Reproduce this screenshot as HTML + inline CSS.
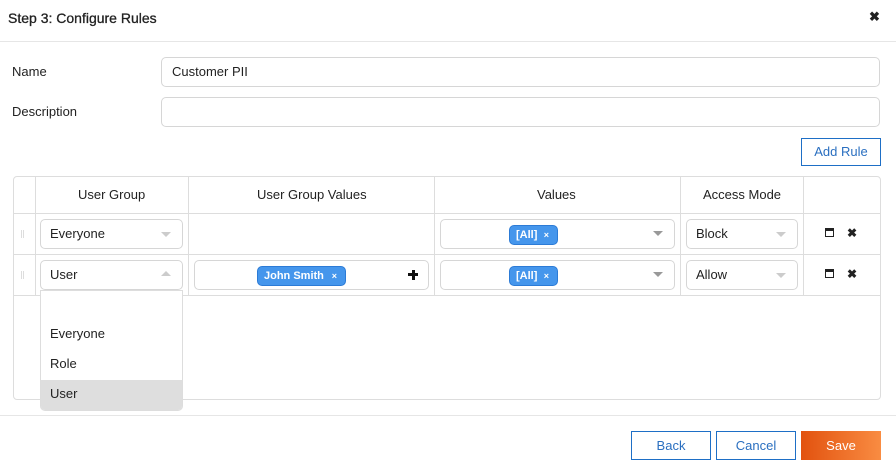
<!DOCTYPE html>
<html><head><style>
*{box-sizing:border-box;margin:0;padding:0}
body{width:896px;height:475px;background:#fff;font-family:"Liberation Sans",sans-serif;color:#222;position:relative;overflow:hidden;font-size:13px}
.a{position:absolute}
.inp{position:absolute;border:1px solid #d6d6d6;border-radius:5px;background:#fff}
.txt{position:absolute;font-size:13px;color:#222}
.caret{position:absolute;width:0;height:0;border-left:5px solid transparent;border-right:5px solid transparent;border-top:5px solid #ccc}
.caretup{position:absolute;width:0;height:0;border-left:5px solid transparent;border-right:5px solid transparent;border-bottom:5px solid #ccc}
.chip{position:absolute;background:#4596ec;border:1px solid #2c7bd6;border-radius:5px;color:#fff;font-weight:bold;font-size:11px;line-height:18px;padding-left:6px}
.chip span{position:absolute;right:8px;font-size:9px;top:0}
.vl{position:absolute;width:1px;background:#ddd}
.hl{position:absolute;height:1px;background:#ddd}
.btn{position:absolute;border:1px solid #1e6fc6;color:#2a6fc0;text-align:center;font-size:13px;background:#fff}
.grip{position:absolute;width:3px;height:8px;background-image:radial-gradient(#777 45%,transparent 50%);background-size:1.5px 2px}
</style></head><body>
<div class="txt" style="left:8px;top:10px;font-size:14px;-webkit-text-stroke:0.3px #222">Step 3: Configure Rules</div>
<div class="a" style="left:869px;top:9px;font-size:13px;font-weight:bold">✖</div>
<div class="hl" style="left:0;top:41px;width:896px;background:#e6e6e6"></div>
<div class="txt" style="left:12px;top:64px">Name</div>
<div class="inp" style="left:161px;top:57px;width:719px;height:30px"></div>
<div class="txt" style="left:172px;top:64px">Customer PII</div>
<div class="txt" style="left:12px;top:104px">Description</div>
<div class="inp" style="left:161px;top:97px;width:719px;height:30px"></div>
<div class="btn" style="left:801px;top:138px;width:80px;height:28px;line-height:26px">Add Rule</div>

<div class="a" style="left:13px;top:176px;width:868px;height:224px;border:1px solid #ddd;border-radius:4px"></div>
<div class="vl" style="left:35px;top:177px;height:118px"></div>
<div class="vl" style="left:188px;top:177px;height:118px"></div>
<div class="vl" style="left:434px;top:177px;height:118px"></div>
<div class="vl" style="left:680px;top:177px;height:118px"></div>
<div class="vl" style="left:803px;top:177px;height:118px"></div>
<div class="hl" style="left:14px;top:213px;width:866px"></div>
<div class="hl" style="left:14px;top:254px;width:866px"></div>
<div class="hl" style="left:14px;top:295px;width:866px"></div>
<div class="txt" style="left:78px;top:187px">User Group</div>
<div class="txt" style="left:257px;top:187px">User Group Values</div>
<div class="txt" style="left:537px;top:187px">Values</div>
<div class="txt" style="left:703px;top:187px">Access Mode</div>

<div class="grip" style="left:21px;top:230px"></div>
<div class="grip" style="left:21px;top:271px"></div>

<div class="inp" style="left:40px;top:219px;width:143px;height:30px"></div>
<div class="txt" style="left:50px;top:226px">Everyone</div>
<div class="caret" style="left:161px;top:232px"></div>
<div class="inp" style="left:440px;top:219px;width:235px;height:30px"></div>
<div class="chip" style="left:509px;top:225px;width:49px;height:20px">[All]<span>×</span></div>
<div class="caret" style="left:653px;top:231px;border-top-color:#999"></div>
<div class="inp" style="left:686px;top:219px;width:112px;height:30px"></div>
<div class="txt" style="left:696px;top:226px">Block</div>
<div class="caret" style="left:776px;top:232px"></div>
<div class="a" style="left:825px;top:228px;width:9px;height:9px;border:1.5px solid #222;border-top-width:3px"></div>
<div class="a" style="left:847px;top:226px;font-size:12px;font-weight:bold">✖</div>

<div class="inp" style="left:40px;top:260px;width:143px;height:30px"></div>
<div class="txt" style="left:50px;top:267px">User</div>
<div class="caretup" style="left:161px;top:271px"></div>
<div class="inp" style="left:194px;top:260px;width:235px;height:30px"></div>
<div class="chip" style="left:257px;top:266px;width:89px;height:20px">John Smith<span>×</span></div>
<div class="a" style="left:408px;top:273px;width:10px;height:3px;background:#111"></div>
<div class="a" style="left:411.5px;top:269.5px;width:3px;height:10px;background:#111"></div>
<div class="inp" style="left:440px;top:260px;width:235px;height:30px"></div>
<div class="chip" style="left:509px;top:266px;width:49px;height:20px">[All]<span>×</span></div>
<div class="caret" style="left:653px;top:272px;border-top-color:#999"></div>
<div class="inp" style="left:686px;top:260px;width:112px;height:30px"></div>
<div class="txt" style="left:696px;top:267px">Allow</div>
<div class="caret" style="left:776px;top:273px"></div>
<div class="a" style="left:825px;top:269px;width:9px;height:9px;border:1.5px solid #222;border-top-width:3px"></div>
<div class="a" style="left:847px;top:267px;font-size:12px;font-weight:bold">✖</div>

<div class="a" style="left:40px;top:290px;width:143px;height:121px;border:1px solid #ddd;border-radius:0 0 5px 5px;background:#fff;overflow:hidden">
<div class="a" style="left:0;top:89px;width:143px;height:32px;background:#dedede"></div>
</div>
<div class="txt" style="left:50px;top:326px">Everyone</div>
<div class="txt" style="left:50px;top:356px">Role</div>
<div class="txt" style="left:50px;top:386px">User</div>

<div class="hl" style="left:0;top:415px;width:896px;background:#e6e6e6"></div>
<div class="btn" style="left:631px;top:431px;width:80px;height:29px;line-height:27px">Back</div>
<div class="btn" style="left:716px;top:431px;width:80px;height:29px;line-height:27px">Cancel</div>
<div class="a" style="left:801px;top:431px;width:80px;height:29px;background:linear-gradient(90deg,#e2520f,#f98c42);color:#fff;text-align:center;line-height:29px">Save</div>
</body></html>
